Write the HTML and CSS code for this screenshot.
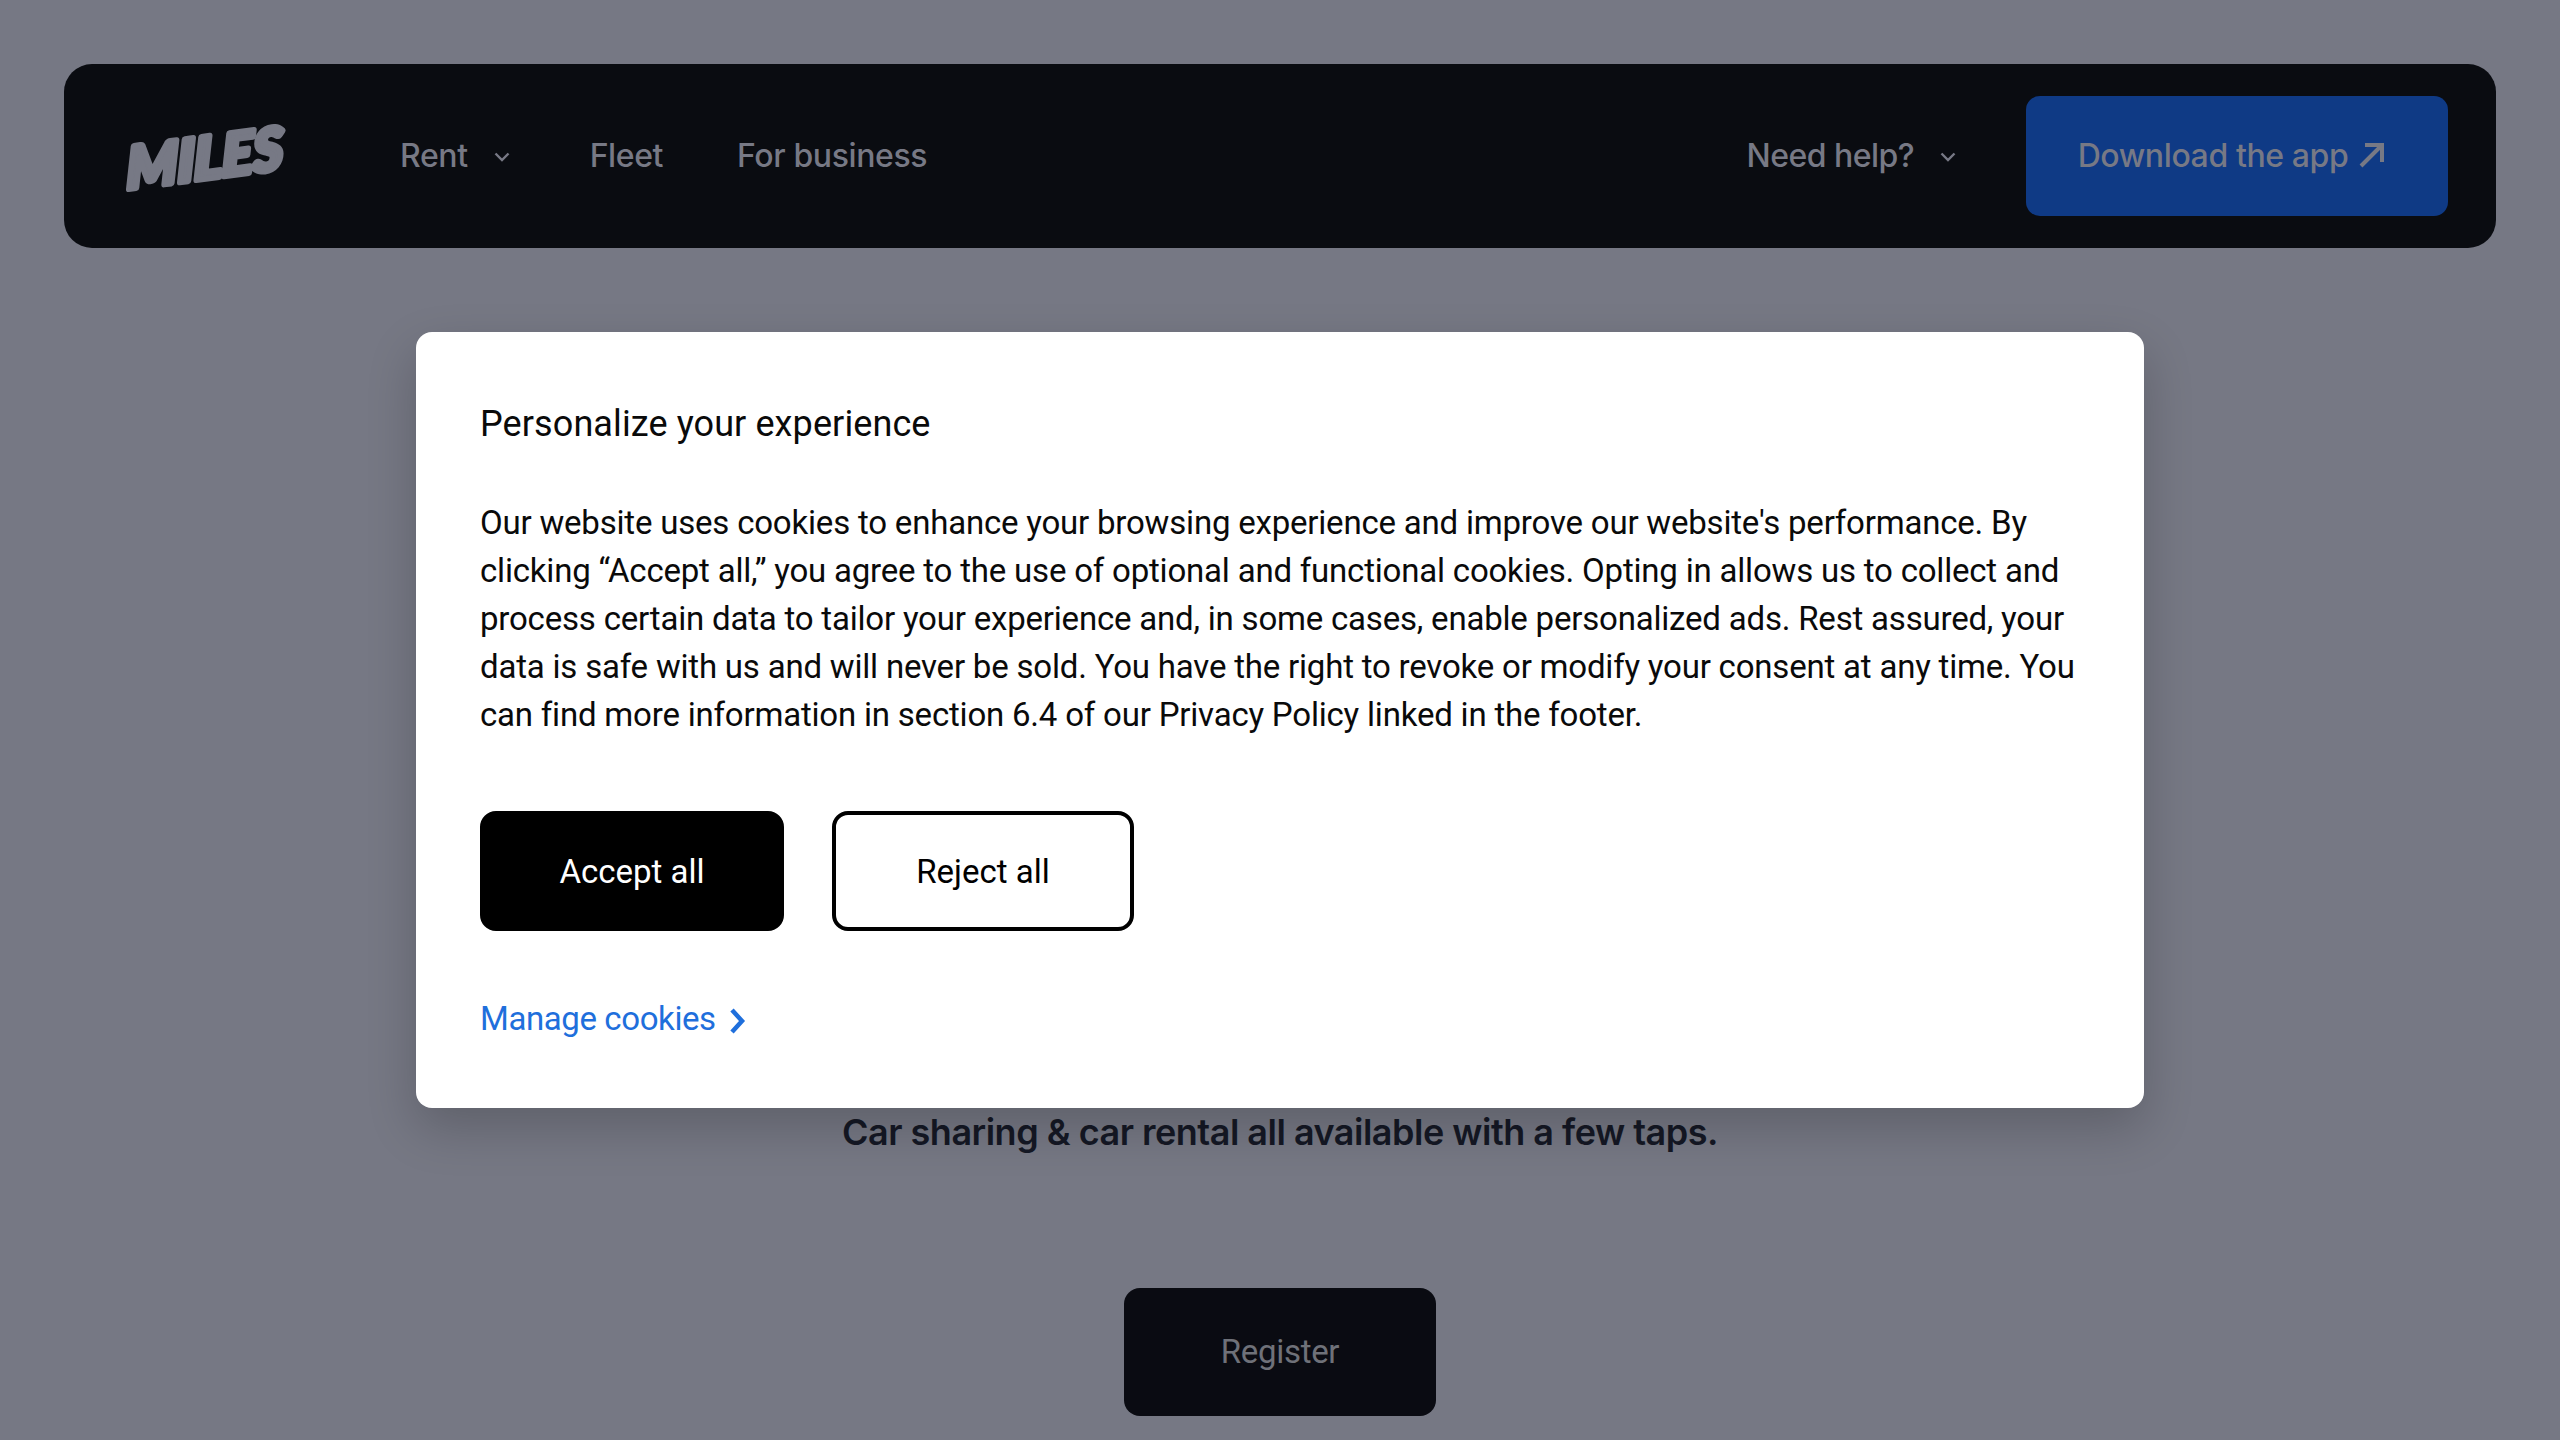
FILE: index.html
```html
<!DOCTYPE html>
<html lang="en">
<head>
<meta charset="utf-8">
<title>MILES</title>
<link rel="stylesheet" href="styles.css">
</head>
<body>
<div class="page">
  <header class="nav">
    <a class="logo" href="#" aria-label="MILES">
      <svg class="logo-svg" width="176" height="84" viewBox="0 0 176 84"><text class="logo-text" x="14" y="74" transform="rotate(-7.5 14 74) skewX(-7)">MILES</text></svg>
    </a>
    <nav class="links">
      <a class="link link-rent" href="#">Rent<svg class="chev" width="20" height="12" viewBox="0 0 20 12"><path d="M3.5 2.5 10 9l6.5-6.5"/></svg></a>
      <a class="link" href="#">Fleet</a>
      <a class="link" href="#">For business</a>
    </nav>
    <a class="link link-help" href="#">Need help?<svg class="chev" width="20" height="12" viewBox="0 0 20 12"><path d="M3.5 2.5 10 9l6.5-6.5"/></svg></a>
    <a class="download" href="#">Download the app<svg class="arrow" width="28" height="28" viewBox="0 0 28 28"><path d="M3 25 24 4M7 4h17v17"/></svg></a>
  </header>
  <main class="hero">
    <p class="tagline">Car sharing &amp; car rental all available with a few taps.</p>
    <a class="register" href="#">Register</a>
  </main>
  <section class="modal">
    <h2 class="modal-title">Personalize your experience</h2>
    <p class="modal-text">Our website uses cookies to enhance your browsing experience and improve our website's performance. By clicking “Accept all,” you agree to the use of optional and functional cookies. Opting in allows us to collect and process certain data to tailor your experience and, in some cases, enable personalized ads. Rest assured, your data is safe with us and will never be sold. You have the right to revoke or modify your consent at any time. You can find more information in section 6.4 of our Privacy Policy linked in the footer.</p>
    <div class="actions">
      <button class="btn btn-accept">Accept all</button>
      <button class="btn btn-reject">Reject all</button>
    </div>
    <a class="manage" href="#">Manage cookies<svg class="manage-chev" width="18" height="30" viewBox="0 0 18 30"><path d="M4 4 14 15 4 26"/></svg></a>
  </section>
</div>
</body>
</html>
```
FILE: styles.css
```css
* { box-sizing: border-box; }
html, body { margin: 0; height: 100%; }
body {
  background: #767884;
  font-family: "Inter", "Liberation Sans", sans-serif;
  overflow: hidden;
}
a { text-decoration: none; color: inherit; }
.page { position: relative; height: 1440px; padding: 64px 64px 0; }

.nav {
  height: 184px;
  background: #0a0c11;
  border-radius: 28px;
  display: flex;
  align-items: center;
  padding: 0 48px 0 58px;
  color: #777985;
}
.logo { display: flex; width: 176px; }
.logo-svg { overflow: visible; }
.logo-text {
  font-family: "Lato", sans-serif;
  font-weight: 900;
  font-style: italic;
  font-size: 58px;
  fill: #777985;
  stroke: #777985;
  stroke-width: 6px;
  stroke-linejoin: round;
}
.links { display: flex; align-items: center; gap: 74px; margin-left: 102px; flex: 1; }
.link {
  display: flex;
  align-items: center;
  font-size: 32px;
  font-weight: 500;
  letter-spacing: -0.4px;
  margin-top: -2px;
}
.link-rent { margin-right: 4px; }
.chev { margin-left: 24px; margin-top: 4px; fill: none; stroke: #777985; stroke-width: 2.4; }
.link-help { margin-right: 68px; letter-spacing: -0.55px; }
.download {
  width: 422px;
  height: 120px;
  background: #0f3a85;
  border-radius: 14px;
  display: flex;
  align-items: center;
  justify-content: center;
  gap: 10px;
  padding: 0 10px 2px 0;
  font-size: 32px;
  font-weight: 500;
  letter-spacing: -0.4px;
  color: #777985;
}
.arrow { fill: none; stroke: #777985; stroke-width: 4; }

.hero {
  display: flex;
  flex-direction: column;
  align-items: center;
  padding-top: 862px;
}
.tagline {
  margin: 0;
  font-size: 36px;
  line-height: 44px;
  font-weight: 600;
  letter-spacing: -0.5px;
  color: #151825;
}
.register {
  margin-top: 134px;
  width: 312px;
  height: 128px;
  background: #0a0b12;
  border-radius: 16px;
  display: flex;
  align-items: center;
  justify-content: center;
  padding-bottom: 2px;
  font-family: "Roboto", sans-serif;
  font-size: 33px;
  letter-spacing: -0.3px;
  color: #6f7179;
}

.modal {
  position: absolute;
  left: 416px;
  top: 332px;
  width: 1728px;
  height: 776px;
  background: #fff;
  border-radius: 16px;
  padding: 71px 64px 0;
  box-shadow: 0 20px 50px rgba(0, 0, 0, 0.2);
  color: #0a0a0a;
  font-family: "Roboto", sans-serif;
}
.modal-title { margin: 0; font-size: 36px; line-height: 42px; font-weight: 400; letter-spacing: 0.1px; }
.modal-text { margin: 54px 0 0; font-size: 33px; line-height: 48px; letter-spacing: -0.2px; }
.actions { display: flex; gap: 48px; margin-top: 72px; }
.btn {
  width: 304px;
  height: 120px;
  border-radius: 16px;
  font: inherit;
  font-size: 33px;
  border: 4px solid #000;
}
.btn-accept { background: #000; color: #fff; }
.btn-reject { background: #fff; color: #000; width: 302px; }
.manage {
  display: inline-flex;
  align-items: center;
  gap: 12px;
  margin-top: 68px;
  font-size: 33px;
  letter-spacing: -0.4px;
  color: #1f6fdc;
}
.manage-chev { fill: none; stroke: #1f6fdc; stroke-width: 4.5; margin-top: 4px; }
```
